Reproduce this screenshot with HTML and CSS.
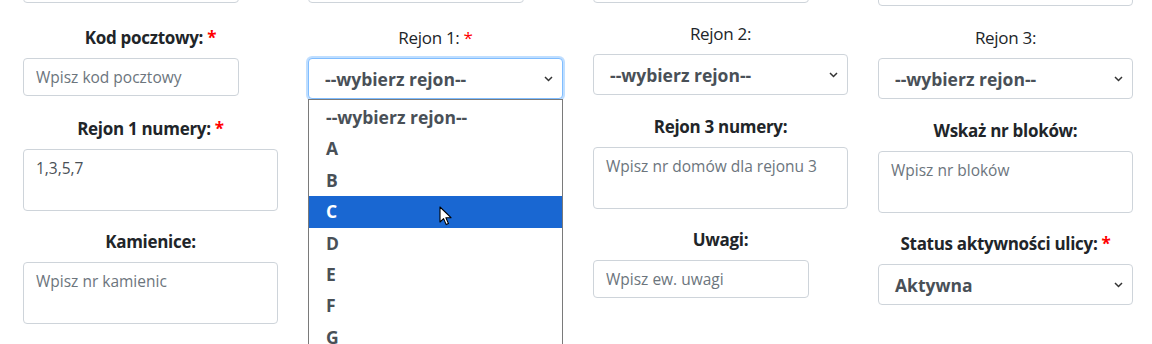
FILE: index.html
```html
<!DOCTYPE html>
<html lang="pl">
<head>
    <meta charset="UTF-8">
    <meta name="viewport" content="width=device-width, initial-scale=1.0">
    <title>Edycja ulicy</title>
    <link rel="stylesheet" href="styles.css">
</head>
<body>
    <form class="street-form">
        <!-- kolumna 1 -->
        <div class="form-col">
            <input class="form-control short top" type="text">
            <div class="form-group gap-23">
                <label>Kod pocztowy: <span class="req">*</span></label>
                <input class="form-control short" type="text" placeholder="Wpisz kod pocztowy">
            </div>
            <div class="form-group gap-21">
                <label>Rejon 1 numery: <span class="req">*</span></label>
                <textarea class="form-control" rows="2">1,3,5,7</textarea>
            </div>
            <div class="form-group gap-19">
                <label>Kamienice:</label>
                <textarea class="form-control" rows="2" placeholder="Wpisz nr kamienic"></textarea>
            </div>
        </div>

        <!-- kolumna 2 -->
        <div class="form-col">
            <input class="form-control short top" type="text">
            <div class="form-group gap-23">
                <label class="plain">Rejon 1: <span class="req">*</span></label>
                <div class="picker">
                    <div class="form-select focused">
                        <span>--wybierz rejon--</span>
                        <svg class="chevron" width="9" height="6" viewBox="0 0 9 6"><path d="M1 1l3.5 3.5L8 1" fill="none" stroke="#333" stroke-width="1.5"/></svg>
                    </div>
                    <ul class="dropdown">
                        <li>--wybierz rejon--</li>
                        <li>A</li>
                        <li>B</li>
                        <li class="active">C</li>
                        <li>D</li>
                        <li>E</li>
                        <li>F</li>
                        <li>G</li>
                    </ul>
                    <svg class="cursor" width="13" height="20" viewBox="0 0 13 20">
                        <path d="M1 1v15l3.6-3.4 2.6 6 2.3-1-2.6-5.9H12z" fill="#fff" stroke="#000" stroke-width="1.1" stroke-linejoin="round"/>
                    </svg>
                </div>
            </div>
        </div>

        <!-- kolumna 3 -->
        <div class="form-col">
            <input class="form-control short top" type="text">
            <div class="form-group gap-19">
                <label class="plain">Rejon 2:</label>
                <div class="form-select">
                    <span>--wybierz rejon--</span>
                    <svg class="chevron" width="9" height="6" viewBox="0 0 9 6"><path d="M1 1l3.5 3.5L8 1" fill="none" stroke="#333" stroke-width="1.5"/></svg>
                </div>
            </div>
            <div class="form-group gap-20">
                <label>Rejon 3 numery:</label>
                <textarea class="form-control" rows="2" placeholder="Wpisz nr domów dla rejonu 3"></textarea>
            </div>
            <div class="form-group gap-19">
                <label>Uwagi:</label>
                <input class="form-control short" type="text" placeholder="Wpisz ew. uwagi">
            </div>
        </div>

        <!-- kolumna 4 -->
        <div class="form-col">
            <div class="form-select top"></div>
            <div class="form-group gap-20">
                <label class="plain">Rejon 3:</label>
                <div class="form-select">
                    <span>--wybierz rejon--</span>
                    <svg class="chevron" width="9" height="6" viewBox="0 0 9 6"><path d="M1 1l3.5 3.5L8 1" fill="none" stroke="#333" stroke-width="1.5"/></svg>
                </div>
            </div>
            <div class="form-group gap-20">
                <label>Wskaż nr bloków:</label>
                <textarea class="form-control" rows="2" placeholder="Wpisz nr bloków"></textarea>
            </div>
            <div class="form-group gap-19">
                <label>Status aktywności ulicy: <span class="req">*</span></label>
                <div class="form-select">
                    <span>Aktywna</span>
                    <svg class="chevron" width="9" height="6" viewBox="0 0 9 6"><path d="M1 1l3.5 3.5L8 1" fill="none" stroke="#333" stroke-width="1.5"/></svg>
                </div>
            </div>
        </div>
    </form>
</body>
</html>
```

FILE: styles.css
```css
body {
    margin: 0;
    font-family: "Open Sans", "Noto Sans", sans-serif;
    color: #212529;
    background-color: #fff;
    height: 344px;
    overflow: hidden;
}

.street-form {
    display: grid;
    grid-template-columns: repeat(4, 255px);
    column-gap: 30px;
    padding-left: 23px;
}

.form-col {
    display: flex;
    flex-direction: column;
}

.form-group {
    display: flex;
    flex-direction: column;
}
.gap-19 { margin-top: 19px; }
.gap-20 { margin-top: 20px; }
.gap-21 { margin-top: 21px; }
.gap-23 { margin-top: 23px; }

.form-group label {
    display: block;
    text-align: center;
    font-size: 17px;
    font-weight: 700;
    line-height: 24px;
    margin-bottom: 8px;
    letter-spacing: -0.3px;
}
.form-group label.plain {
    font-weight: 400;
}
.req {
    color: #ff0000;
}

.form-control {
    box-sizing: border-box;
    height: 38px;
    padding: 6px 12px;
    font-family: "Open Sans", "Noto Sans", sans-serif;
    font-size: 15.5px;
    line-height: 24px;
    color: #495057;
    background-color: #fff;
    border: 1px solid #ced4da;
    border-radius: 4px;
    outline: none;
    margin: 0;
}
.form-control::placeholder {
    color: #6c757d;
}
.form-control.short {
    width: 216px;
}
textarea.form-control {
    display: block;
    width: 100%;
    height: 62px;
    resize: none;
}

.form-select {
    box-sizing: border-box;
    height: 41px;
    display: flex;
    align-items: center;
    justify-content: space-between;
    padding: 0 9px 0 16px;
    font-size: 17.5px;
    font-weight: 700;
    color: #495057;
    border: 1px solid #ced4da;
    border-radius: 4px;
    background-color: #fff;
}
.form-select.focused {
    border-color: #80bdff;
    box-shadow: 0 0 0 2px rgba(0, 123, 255, 0.25);
}

/* pole z poprzedniego wiersza, widoczna tylko dolna krawedz */
.form-col > .top {
    margin-top: -35px;
}

.picker {
    position: relative;
}

.dropdown {
    position: absolute;
    top: 41px;
    left: 0;
    right: 0;
    margin: 0;
    padding: 2px 0 0;
    list-style: none;
    background-color: #fff;
    border: 1px solid #7a7a7a;
    z-index: 2;
}
.dropdown li {
    height: 31.4px;
    line-height: 31.4px;
    padding-left: 17px;
    font-size: 17.5px;
    font-weight: 700;
    color: #495057;
}
.dropdown li.active {
    background-color: #1967d2;
    color: #fff;
}

.cursor {
    position: absolute;
    left: 131px;
    top: 148px;
    z-index: 3;
}
```
